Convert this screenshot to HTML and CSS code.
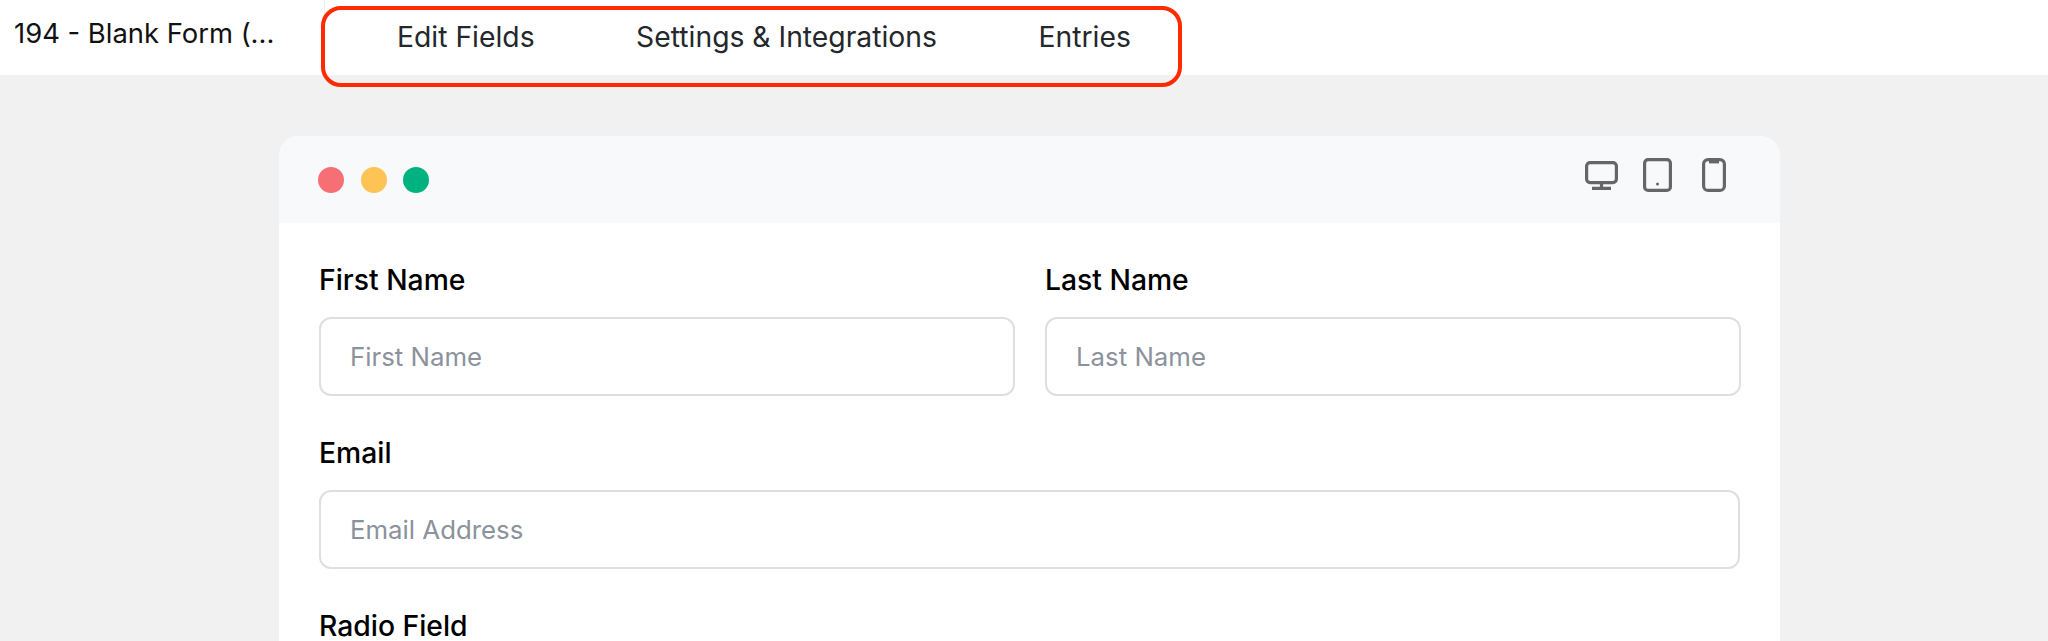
FILE: index.html
```html
<!DOCTYPE html>
<html lang="en">
<head>
<meta charset="utf-8">
<title>Blank Form</title>
<link rel="stylesheet" href="styles.css">
</head>
<body>
<header class="topbar">
  <div class="form-title">194 - Blank Form (...</div>
  <nav class="tabs">
    <a class="tab">Edit Fields</a>
    <a class="tab">Settings &amp; Integrations</a>
    <a class="tab">Entries</a>
    <span class="highlight"></span>
  </nav>
</header>
<main class="stage">
  <section class="card">
    <div class="card-head">
      <div class="dots">
        <span class="dot dot-red"></span>
        <span class="dot dot-yellow"></span>
        <span class="dot dot-green"></span>
      </div>
      <div class="devices">
        <svg class="device" width="33" height="29" viewBox="0 0 33 29" fill="none" stroke="#666" stroke-width="3.2">
          <rect x="1.6" y="1.6" width="29.8" height="20" rx="3.5"/>
          <path d="M16.5 22v5.4M7 27.4h19"/>
        </svg>
        <svg class="device" width="29" height="34" viewBox="0 0 29 34" fill="none" stroke="#666" stroke-width="3.2">
          <rect x="1.6" y="1.6" width="25.8" height="30.8" rx="3.5"/>
          <circle cx="14.5" cy="26" r="1.5" fill="#666" stroke="none"/>
        </svg>
        <svg class="device device-phone" width="24" height="34" viewBox="0 0 24 34" fill="none" stroke="#666" stroke-width="3.2">
          <rect x="1.6" y="1.6" width="20.8" height="30.8" rx="4.5"/>
          <path d="M7 3.4h10" stroke-width="4"/>
        </svg>
      </div>
    </div>
    <form class="card-body">
      <div class="row">
        <div class="field">
          <label class="label">First Name</label>
          <input class="input" type="text" placeholder="First Name">
        </div>
        <div class="field">
          <label class="label">Last Name</label>
          <input class="input" type="text" placeholder="Last Name">
        </div>
      </div>
      <div class="field">
        <label class="label">Email</label>
        <input class="input" type="text" placeholder="Email Address">
      </div>
      <div class="field">
        <label class="label">Radio Field</label>
      </div>
    </form>
  </section>
</main>
</body>
</html>
```

FILE: styles.css
```css
* { box-sizing: border-box; }
html, body { height: 100%; }
body {
  margin: 0;
  background: #f1f1f1;
  font-family: Inter, "Liberation Sans", sans-serif;
  overflow: hidden;
}
.topbar {
  display: flex;
  height: 75px;
  background: #fff;
}
.form-title {
  width: 325px;
  padding: 18px 0 0 14px;
  border-right: 1px solid #ececec;
  font-size: 27.4px;
  line-height: 30px;
  color: #111;
  white-space: nowrap;
}
.tabs {
  position: relative;
  display: flex;
  gap: 101.5px;
  padding: 20px 0 0 72px;
  font-size: 28.3px;
  line-height: 34px;
  color: #24272b;
}
.tab { white-space: nowrap; }
.highlight {
  position: absolute;
  left: -4px;
  top: 6px;
  width: 861px;
  height: 81px;
  border: 4px solid #ff2a00;
  border-radius: 20px;
  pointer-events: none;
}
.stage { padding: 61px 0 0 279px; }
.card {
  width: 1501px;
  background: #fff;
  border-radius: 20px 20px 0 0;
}
.card-head {
  display: flex;
  justify-content: space-between;
  align-items: center;
  height: 87px;
  padding: 0 54px 0 39px;
  background: #f8f9fb;
  border-radius: 20px 20px 0 0;
}
.dots { display: flex; gap: 16.5px; }
.dot { width: 26px; height: 26px; border-radius: 50%; }
.dot-red { background: #f56f75; }
.dot-yellow { background: #fec355; }
.dot-green { background: #00b27f; }
.devices { display: flex; align-items: center; gap: 25px; margin-bottom: 9px; }
.device { display: block; }
.device-phone { margin-left: 5px; }
.card-body {
  display: flex;
  flex-direction: column;
  gap: 40px;
  padding: 40px 40px 0;
}
.row { display: grid; grid-template-columns: 696px 696px; gap: 30px; }
.label {
  display: block;
  margin-bottom: 20px;
  font-size: 28.3px;
  line-height: 34px;
  font-weight: 500;
  color: #000;
}
.input {
  display: block;
  width: 100%;
  height: 79px;
  padding: 0 29px;
  border: 2px solid #dfdfdf;
  border-radius: 12px;
  background: #fff;
  font: 400 25.8px Inter, "Liberation Sans", sans-serif;
  outline: none;
}
.input::placeholder { color: #8b929b; opacity: 1; }
```
